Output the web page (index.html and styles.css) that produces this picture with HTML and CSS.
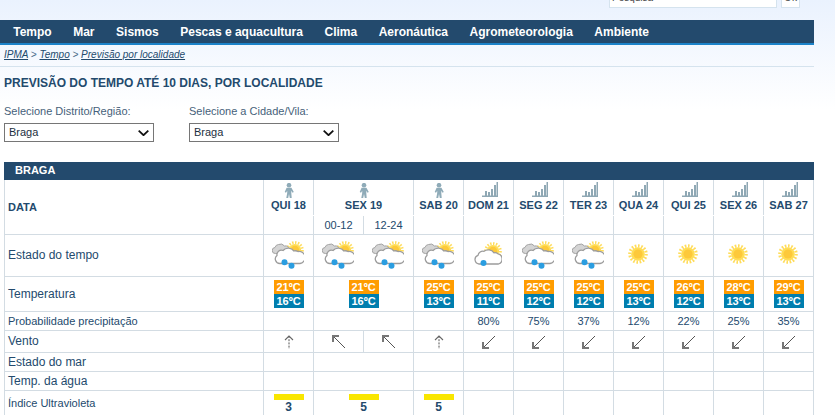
FILE: index.html
```html
<!DOCTYPE html>
<html lang="pt">
<head>
<meta charset="utf-8">
<title>IPMA - Previsão por localidade</title>
<link rel="stylesheet" href="styles.css">
</head>
<body>
<svg class="defs" aria-hidden="true">
  <symbol id="sunball" viewBox="0 0 20 20">
    <circle cx="10" cy="10" r="8.2" fill="none" stroke="#ffdc5a" stroke-width="3.2" stroke-dasharray="1.6 1.6"/>
    <circle cx="10" cy="10" r="6.8" fill="#ffdd55"/>
    <circle cx="10" cy="10" r="4.6" fill="#fdc93a"/>
  </symbol>
  <symbol id="showers" viewBox="0 0 32 28">
    <use href="#sunball" x="14" y="0" width="18" height="18"/>
    <path d="M3.5 12.5a3 3 0 0 1-.5-6 4 4 0 0 1 3.500-3 5 5 0 0 1 6 1.500 3.700 3.700 0 0 1 1.500 7.500z" fill="#d4d4d4" stroke="#a3a3a3"/>
    <path d="M8 22.500a4.500 4.500 0 0 1-3-8 4.500 4.500 0 0 1 6-5 7 7 0 0 1 11 .5 5 5 0 0 1 4 .5 5.500 5.500 0 0 1 2 12z" fill="#fff" stroke="#9c9c9c" stroke-width="1.300"/>
    <circle cx="12.500" cy="21.300" r="3" fill="#2a9de0"/>
    <circle cx="19.500" cy="24.800" r="3" fill="#2a9de0"/>
  </symbol>
  <symbol id="cloudsun" viewBox="0 0 28 24">
    <use href="#sunball" x="10" y="0" width="18" height="18"/>
    <path d="M5 22a4.500 4.500 0 0 1-1-8.700 5 5 0 0 1 6-4 7 7 0 0 1 10 1.500 5 5 0 0 1 4 1 5.300 5.300 0 0 1 .5 10.200z" fill="#fff" stroke="#9c9c9c" stroke-width="1.300"/>
    <circle cx="9.500" cy="21" r="3" fill="#2a9de0"/>
  </symbol>
  <symbol id="person" viewBox="0 0 10 15">
    <circle cx="5" cy="2.200" r="2.300" fill="#8fabb8"/>
    <path d="M2.600 4.800h4.800l2.400 4.200-1.300.7-1.200-2v2.400L7.700 15H5.800L5 11l-.8 4H2.300l.9-4.900V7.700l-1.200 2L.7 9z" fill="#8fabb8"/>
  </symbol>
  <symbol id="bars" viewBox="0 0 16 15">
    <path d="M0 13.500h16V15H0zM3 9h2v4.500H3zM6 10h2v3.500H6zM9 7h2v6.500H9zM12 3h2v10.500h-2zM14.500 0h1.500v14h-1.500z" fill="#8fa8b4"/>
  </symbol>
  <symbol id="wind-up" viewBox="0 0 14 14">
    <path d="M7 1v13" stroke="#555" stroke-dasharray="2 1.200" fill="none"/>
    <path d="M3 5l4-4 4 4" stroke="#666" stroke-width="1.100" fill="none"/>
  </symbol>
  <symbol id="wind-nw" viewBox="0 0 14 14">
    <path d="M1 1l12 12" stroke="#555" fill="none"/>
    <path d="M1 7V1h6" stroke="#777" stroke-width="2" fill="none"/>
  </symbol>
  <symbol id="wind-sw" viewBox="0 0 14 14">
    <path d="M13 1L1 13" stroke="#555" fill="none"/>
    <path d="M1 7v6h6" stroke="#777" stroke-width="2" fill="none"/>
  </symbol>
  <symbol id="chev" viewBox="0 0 11 6">
    <path d="M.7 .7l4.800 4.500L10.300 .7" stroke="#111" stroke-width="1.800" fill="none"/>
  </symbol>
</svg>

<header class="top">
  <input class="search" value="Pesquisa" aria-label="Pesquisa">
  <button class="ok">Ok</button>
</header>

<nav class="nav">
  <a>Tempo</a><a>Mar</a><a>Sismos</a><a>Pescas e aquacultura</a><a>Clima</a><a>Aeronáutica</a><a>Agrometeorologia</a><a>Ambiente</a>
</nav>

<div class="crumbs"><a>IPMA</a> &gt; <a>Tempo</a> &gt; <a>Previsão por localidade</a></div>

<main class="content">
  <h1 class="title">PREVISÃO DO TEMPO ATÉ 10 DIAS, POR LOCALIDADE</h1>

  <div class="filters">
    <div class="filter">
      <label class="filter-label">Selecione Distrito/Região:</label>
      <div class="select"><span>Braga</span><svg class="chev"><use href="#chev"/></svg></div>
    </div>
    <div class="filter">
      <label class="filter-label">Selecione a Cidade/Vila:</label>
      <div class="select"><span>Braga</span><svg class="chev"><use href="#chev"/></svg></div>
    </div>
  </div>

  <div class="place">BRAGA</div>
  <table class="fc">
    <colgroup><col class="c-label"><col span="11" class="c-day"></colgroup>
    <tr class="r-head">
      <th class="lbl" rowspan="2">DATA</th>
      <th><svg class="ic-person"><use href="#person"/></svg><span class="day">QUI 18</span></th>
      <th colspan="2"><svg class="ic-person"><use href="#person"/></svg><span class="day">SEX 19</span></th>
      <th><svg class="ic-person"><use href="#person"/></svg><span class="day">SAB 20</span></th>
      <th><svg class="ic-bars"><use href="#bars"/></svg><span class="day">DOM 21</span></th>
      <th><svg class="ic-bars"><use href="#bars"/></svg><span class="day">SEG 22</span></th>
      <th><svg class="ic-bars"><use href="#bars"/></svg><span class="day">TER 23</span></th>
      <th><svg class="ic-bars"><use href="#bars"/></svg><span class="day">QUA 24</span></th>
      <th><svg class="ic-bars"><use href="#bars"/></svg><span class="day">QUI 25</span></th>
      <th><svg class="ic-bars"><use href="#bars"/></svg><span class="day">SEX 26</span></th>
      <th><svg class="ic-bars"><use href="#bars"/></svg><span class="day">SAB 27</span></th>
    </tr>
    <tr class="r-sub">
      <td></td><td>00-12</td><td>12-24</td><td></td><td></td><td></td><td></td><td></td><td></td><td></td><td></td><td></td>
    </tr>
    <tr class="r-wx">
      <td class="lbl">Estado do tempo</td>
      <td><svg class="ic-showers"><use href="#showers"/></svg></td>
      <td colspan="2"><div class="pair"><svg class="ic-showers"><use href="#showers"/></svg><svg class="ic-showers"><use href="#showers"/></svg></div></td>
      <td><svg class="ic-showers"><use href="#showers"/></svg></td>
      <td><svg class="ic-cloudsun"><use href="#cloudsun"/></svg></td>
      <td><svg class="ic-showers"><use href="#showers"/></svg></td>
      <td><svg class="ic-showers"><use href="#showers"/></svg></td>
      <td><svg class="ic-sun"><use href="#sunball"/></svg></td>
      <td><svg class="ic-sun"><use href="#sunball"/></svg></td>
      <td><svg class="ic-sun"><use href="#sunball"/></svg></td>
      <td><svg class="ic-sun"><use href="#sunball"/></svg></td>
    </tr>
    <tr class="r-temp">
      <td class="lbl">Temperatura</td>
      <td><div class="tmax">21ºC</div><div class="tmin">16ºC</div></td>
      <td colspan="2"><div class="tmax">21ºC</div><div class="tmin">16ºC</div></td>
      <td><div class="tmax">25ºC</div><div class="tmin">13ºC</div></td>
      <td><div class="tmax">25ºC</div><div class="tmin">11ºC</div></td>
      <td><div class="tmax">25ºC</div><div class="tmin">12ºC</div></td>
      <td><div class="tmax">25ºC</div><div class="tmin">12ºC</div></td>
      <td><div class="tmax">25ºC</div><div class="tmin">13ºC</div></td>
      <td><div class="tmax">26ºC</div><div class="tmin">12ºC</div></td>
      <td><div class="tmax">28ºC</div><div class="tmin">13ºC</div></td>
      <td><div class="tmax">29ºC</div><div class="tmin">13ºC</div></td>
    </tr>
    <tr class="r-prob">
      <td class="lbl small">Probabilidade precipitação</td>
      <td></td><td colspan="2"></td><td></td>
      <td>80%</td><td>75%</td><td>37%</td><td>12%</td><td>22%</td><td>25%</td><td>35%</td>
    </tr>
    <tr class="r-wind">
      <td class="lbl">Vento</td>
      <td><svg class="ic-wind"><use href="#wind-up"/></svg></td>
      <td><svg class="ic-wind"><use href="#wind-nw"/></svg></td>
      <td><svg class="ic-wind"><use href="#wind-nw"/></svg></td>
      <td><svg class="ic-wind"><use href="#wind-up"/></svg></td>
      <td><svg class="ic-wind"><use href="#wind-sw"/></svg></td>
      <td><svg class="ic-wind"><use href="#wind-sw"/></svg></td>
      <td><svg class="ic-wind"><use href="#wind-sw"/></svg></td>
      <td><svg class="ic-wind"><use href="#wind-sw"/></svg></td>
      <td><svg class="ic-wind"><use href="#wind-sw"/></svg></td>
      <td><svg class="ic-wind"><use href="#wind-sw"/></svg></td>
      <td><svg class="ic-wind"><use href="#wind-sw"/></svg></td>
    </tr>
    <tr class="r-plain">
      <td class="lbl">Estado do mar</td>
      <td></td><td colspan="2"></td><td></td><td></td><td></td><td></td><td></td><td></td><td></td><td></td>
    </tr>
    <tr class="r-plain">
      <td class="lbl">Temp. da água</td>
      <td></td><td colspan="2"></td><td></td><td></td><td></td><td></td><td></td><td></td><td></td><td></td>
    </tr>
    <tr class="r-uv">
      <td class="lbl small">Índice Ultravioleta</td>
      <td><div class="uvbar"></div><div class="uvnum">3</div></td>
      <td colspan="2"><div class="uvbar"></div><div class="uvnum">5</div></td>
      <td><div class="uvbar"></div><div class="uvnum">5</div></td>
      <td></td><td></td><td></td><td></td><td></td><td></td><td></td>
    </tr>
  </table>
</main>
</body>
</html>
```

FILE: styles.css
```css
html, body {
  margin: 0;
  padding: 0;
  height: 415px;
  overflow: hidden;
}
body {
  font-family: "Liberation Sans", Arial, sans-serif;
  font-size: 11px;
  color: #234a6d;
  background: linear-gradient(#eaf2fe 0, #ffffff 110px) no-repeat #fff;
}
.defs { display: none; }

.top {
  height: 20px;
  width: 800px;
  display: flex;
  justify-content: flex-end;
  align-items: flex-end;
  gap: 4px;
  overflow: hidden;
}
.search {
  box-sizing: border-box;
  width: 168px;
  height: 22px;
  margin-bottom: 12px;
  padding: 2px 2px 0;
  border: 1px solid #d5e3ee;
  border-width: 0 1px 1px;
  background: #fff;
  font: 10px "Liberation Sans", Arial, sans-serif;
  color: #444;
}
.ok {
  box-sizing: border-box;
  width: 19px;
  height: 22px;
  margin-bottom: 12px;
  padding: 2px 0 0;
  border: 1px solid #d5e3ee;
  border-width: 0 1px 1px;
  background: #fff;
  font: 10px "Liberation Sans", Arial, sans-serif;
  color: #444;
}

.nav {
  width: 814px;
  height: 23px;
  display: flex;
  align-items: center;
  padding-left: 2.500px;
  box-sizing: border-box;
  background: #234a6d;
  box-shadow: 0 2px 0 #1c83c9;
}
.nav a {
  padding: 0 10.750px;
  font-weight: 700;
  font-size: 12px;
  color: #fff;
}

.crumbs {
  width: 814px;
  box-sizing: border-box;
  height: 22px;
  margin-top: 2px;
  padding-left: 4px;
  line-height: 20px;
  font-size: 10px;
  font-style: italic;
  color: #4a6c8a;
  border-bottom: 1px solid #d5e3ee;
}
.crumbs a {
  text-decoration: underline;
  color: #234a6d;
}

.content { padding-left: 4px; width: 810px; }

.title {
  margin: 9px 0 0;
  font-size: 12px;
  line-height: 15px;
  font-weight: 700;
  color: #234a6d;
}

.filters {
  display: flex;
  gap: 35px;
  margin-top: 13px;
}
.filter {
  display: flex;
  flex-direction: column;
  gap: 5px;
}
.filter-label {
  line-height: 14px;
  color: #46617a;
}
.select {
  position: relative;
  box-sizing: border-box;
  width: 150px;
  height: 19px;
  padding-left: 4px;
  border: 1px solid #767676;
  background: #fff;
  line-height: 17px;
  color: #1c2f40;
}
.chev {
  position: absolute;
  right: 4px;
  top: 6px;
  width: 11px;
  height: 6px;
}

.place {
  margin-top: 20px;
  height: 18px;
  padding-left: 11px;
  line-height: 17px;
  font-weight: 700;
  background: #234a6d;
  color: #fff;
}

.fc {
  border-collapse: collapse;
  table-layout: fixed;
  width: 810px;
  background: #fff;
}
.c-label { width: 259px; }
.c-day { width: 50px; }
.fc th, .fc td {
  padding: 0;
  border: 1px solid #d3dce3;
  text-align: center;
  vertical-align: middle;
  font-weight: 400;
}
.fc tr:first-child th { border-top: 0; }

.r-head th {
  height: 35px;
  vertical-align: top;
  border-bottom-color: #fff;
}
.r-head th.lbl { border-bottom-color: #d3dce3; }
.r-sub td { height: 18px; border-top-color: #fff; }
.r-wx td { height: 41px; }
.r-temp td { height: 34px; }
.r-prob td { height: 18px; }
.r-wind td { height: 21px; }
.r-plain td { height: 18px; }
.r-uv td { height: 25px; vertical-align: top; }

.fc .lbl {
  height: auto;
  text-align: left;
  vertical-align: middle;
  padding: 0 0 1px 3px;
  font-size: 12px;
}
.fc .lbl.small { font-size: 11px; }
.fc th.lbl {
  font-weight: 700;
  font-size: 11px;
}

.day {
  display: block;
  font-weight: 700;
  font-size: 11px;
  line-height: 13px;
}
.ic-person { display: block; width: 10px; height: 15px; margin: 3px auto 1px; }
.ic-bars { display: block; width: 16px; height: 15px; margin: 2px auto 2px; transform: translateX(1px); }
.ic-showers { display: block; width: 32px; height: 28px; margin: 0 9px 2px 8px; }
.ic-cloudsun { display: block; width: 28px; height: 24px; margin: 0 11px 4px 10px; }
.ic-sun { display: block; width: 20px; height: 20px; margin: 0 15px 4px 14px; }
.ic-wind { display: block; width: 14px; height: 14px; margin: 0 auto; }
.pair { display: flex; justify-content: space-around; }

.tmax, .tmin {
  width: 30px;
  height: 14px;
  margin: 0 auto;
  font-weight: 700;
  line-height: 14px;
  color: #fff;
}
.tmax { background: #ff9c00; }
.tmin { background: #007eae; }

.uvbar {
  width: 30px;
  height: 6px;
  margin: 3px auto 0;
  background: #f9e600;
}
.uvnum {
  font-weight: 700;
  font-size: 12px;
  line-height: 14px;
}
```
